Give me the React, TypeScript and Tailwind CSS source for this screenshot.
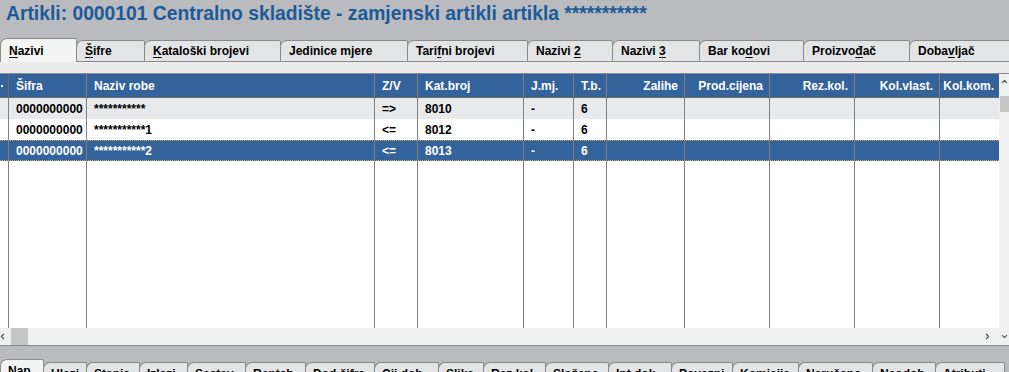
import React from "react";
import { ChevronLeft, ChevronRight, ChevronUp, ChevronDown } from "lucide-react";

type Tab = { label: React.ReactNode; w: number };

const u = (s: string) => <span className="underline underline-offset-2">{s}</span>;

const topTabs: Tab[] = [
  { label: <>{u("N")}azivi</>, w: 77 },
  { label: <>{u("Š")}ifre</>, w: 69 },
  { label: <>{u("K")}ataloški brojevi</>, w: 137 },
  { label: <>Jedinice mjere</>, w: 128 },
  { label: <>Tari{u("f")}ni brojevi</>, w: 121 },
  { label: <>Nazivi {u("2")}</>, w: 86 },
  { label: <>Nazivi {u("3")}</>, w: 88 },
  { label: <>Bar ko{u("d")}ovi</>, w: 105 },
  { label: <>Proizvo{u("đ")}ač</>, w: 107 },
  { label: <>Doba{u("v")}ljač</>, w: 110 },
];

const bottomTabs: [string, number][] = [
  ["Nap.", 44],
  ["Ulazi", 44],
  ["Stanje", 54],
  ["Izlazi", 49],
  ["Sastav", 59],
  ["Rentab.", 61],
  ["Dod.šifre", 70],
  ["Cij.dob.", 65],
  ["Slika", 46],
  ["Rez.kol.", 63],
  ["Složene", 64],
  ["Int.dok.", 64],
  ["Povezni", 62],
  ["Komisija", 67],
  ["Naručeno", 75],
  ["Neodob.", 64],
  ["Atributi", 70],
];

type Col = { title: string; w: number; right?: boolean };
const cols: Col[] = [
  { title: "Šifra", w: 78 },
  { title: "Naziv robe", w: 288 },
  { title: "Z/V", w: 43 },
  { title: "Kat.broj", w: 106 },
  { title: "J.mj.", w: 50 },
  { title: "T.b.", w: 33 },
  { title: "Zalihe", w: 78, right: true },
  { title: "Prod.cijena", w: 85, right: true },
  { title: "Rez.kol.", w: 85, right: true },
  { title: "Kol.vlast.", w: 85, right: true },
  { title: "Kol.kom.", w: 60, right: true },
];

const rows = [
  { cells: ["0000000000", "***********", "=>", "8010", "-", "6"], kind: "alt" },
  { cells: ["0000000000", "***********1", "<=", "8012", "-", "6"], kind: "plain" },
  { cells: ["0000000000", "***********2", "<=", "8013", "-", "6"], kind: "sel" },
];

function Cell({ w, last, children, right, cls }: { w: number; last?: boolean; children?: React.ReactNode; right?: boolean; cls?: string }) {
  return (
    <div
      className={`h-full shrink-0 overflow-hidden whitespace-nowrap flex items-center ${last ? "" : "border-r border-[#808080]"} ${right ? "justify-end pr-[6px]" : "pl-[7px]"} ${cls ?? ""}`}
      style={{ width: w }}
    >
      {children}
    </div>
  );
}

export default function App() {
  return (
    <div className="w-[1009px] h-[372px] overflow-hidden bg-[#b9bbbe] text-[12px] font-bold text-black" style={{ fontFamily: '"Liberation Sans", Arial, sans-serif' }}>
      <div className="h-[38px] pl-[6px] pt-[1px] text-[19.3px] font-bold text-[#1d5a98] leading-[26px] whitespace-nowrap">
        Artikli: 0000101 Centralno skladište - zamjenski artikli artikla ***********
      </div>

      <div className="flex items-end h-[24px]">
        {topTabs.map((t, i) => (
          <div
            key={i}
            className={`shrink-0 flex items-center pl-[8px] border border-[#8a8a8a] rounded-tl-[7px] rounded-tr-[2px] ${
              i === 0 ? "h-[24px] bg-[#f4f4f4] border-b-0 pl-[6px]" : "h-[22px] bg-[#e3e4e6] -ml-px"
            }`}
            style={{ width: t.w }}
          >
            <span className="whitespace-pre">{t.label}</span>
          </div>
        ))}
      </div>

      <div className="h-[12px] bg-[#ececec] border-b border-[#8a8a8a]" />

      <div className="flex h-[271px] bg-white">
        <div className="w-[999px] flex flex-col">
          <div className="flex h-[24px] bg-[#34629a] text-white border-b border-[#6b6b6b]">
            <div className="w-[9px] h-full shrink-0 border-r border-[#6b6b6b] flex items-center">
              <span className="w-[2px] h-[2px] bg-white ml-[1px]" />
            </div>
            {cols.map((c, i) => (
              <Cell key={i} w={c.w} right={c.right} last={i === cols.length - 1} cls="border-[#6b6b6b]">
                {c.title}
              </Cell>
            ))}
          </div>
          {rows.map((r, ri) => (
            <div
              key={ri}
              className={`flex h-[21px] ${
                r.kind === "alt" ? "bg-[#e8e9eb]" : r.kind === "sel" ? "bg-[#34629a] text-white border-y border-dotted border-[#d9a441]" : "bg-white"
              }`}
            >
              <Cell w={9} />
              {cols.map((c, i) => (
                <Cell key={i} w={c.w} right={c.right} last={i === cols.length - 1}>
                  {r.cells[i] ?? ""}
                </Cell>
              ))}
            </div>
          ))}
          <div className="flex flex-1">
            <Cell w={9} />
            {cols.map((c, i) => (
              <Cell key={i} w={c.w} last={i === cols.length - 1} />
            ))}
          </div>
          <div className="h-[17px] shrink-0 bg-[#f0f0f0] flex items-center">
            <ChevronLeft size={9} strokeWidth={3} className="text-[#505050] -ml-[2px] shrink-0" />
            <div className="w-[17px] h-[17px] shrink-0 bg-[#c6c6c6] ml-[4px]" />
            <ChevronRight size={9} strokeWidth={3} className="text-[#505050] ml-auto mr-[7px] shrink-0" />
          </div>
        </div>
        <div className="w-[10px] bg-[#f0f0f0] flex flex-col items-center">
          <ChevronUp size={9} strokeWidth={3} className="text-[#505050] mt-[3px]" />
          <div className="w-[9px] h-[16px] bg-[#c6c6c6] mt-[10px] ml-[1px]" />
          <ChevronDown size={9} strokeWidth={3} className="text-[#505050] mt-auto mb-[4px]" />
        </div>
      </div>

      <div className="h-[14px] border-t border-[#8a8a8a]" />

      <div className="flex items-end h-[13px]">
        {bottomTabs.map(([l, w], i) => (
          <div
            key={i}
            className={`shrink-0 flex items-start pl-[7px] pt-[4px] border border-b-0 border-[#8a8a8a] rounded-tl-[7px] rounded-tr-[2px] ${
              i === 0 ? "h-[13px] bg-[#f4f4f4] pl-[6px]" : "h-[10px] pt-[1px] bg-[#e3e4e6] -ml-px"
            }`}
            style={{ width: w }}
          >
            <span className="leading-[14px] whitespace-nowrap">{l}</span>
          </div>
        ))}
      </div>
    </div>
  );
}
